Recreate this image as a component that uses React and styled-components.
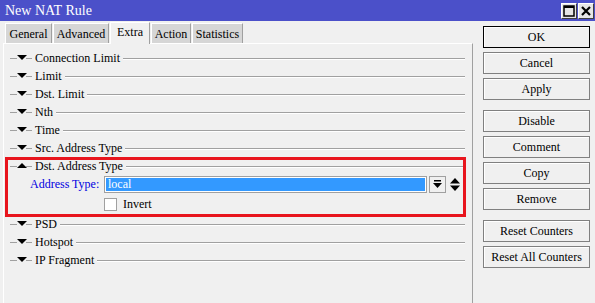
import styled, { createGlobalStyle } from 'styled-components'

const GlobalStyle = createGlobalStyle`
    html, body {
        margin: 0;
        padding: 0;
        background: #f0f0f0;
    }
    body {
        font-family: "Liberation Serif", "DejaVu Serif", "Times New Roman", serif;
        font-size: 12px;
        color: #000;
    }
`

const filters = [
    'Connection Limit',
    'Limit',
    'Dst. Limit',
    'Nth',
    'Time',
    'Src. Address Type',
]

const after = ['PSD', 'Hotspot', 'IP Fragment']

const tabs = [
    {name: 'General', w: 47},
    {name: 'Advanced', w: 56},
    {name: 'Extra', w: 40},
    {name: 'Action', w: 40},
    {name: 'Statistics', w: 51},
]

const buttonGroups = [
    ['OK', 'Cancel', 'Apply'],
    ['Disable', 'Comment', 'Copy', 'Remove'],
    ['Reset Counters', 'Reset All Counters'],
]

const Arrow = ({up}) => (
    <ArrowSvg width="10" height="6" viewBox="0 0 10 6">
        {up
            ? <polygon points="5,0 10,5 0,5" fill="#000" />
            : <polygon points="0,0 10,0 5,5" fill="#000" />}
    </ArrowSvg>
)

const Section = ({title, up}) => (
    <Row>
        <Dash $w={7} />
        <Arrow up={up} />
        <Dash $w={6} />
        <RowLabel>{title}</RowLabel>
        <Line />
    </Row>
)

const App = () => {
    return (
        <Window>
            <GlobalStyle />
            <TitleBar>
                <Title>New NAT Rule</Title>
                <Controls>
                    <CtrlButton>
                        <svg width="12" height="12" viewBox="0 0 12 12">
                            <rect x="1" y="1" width="10" height="10" fill="none" stroke="#000" strokeWidth="1.5" />
                            <rect x="1" y="1" width="10" height="2" fill="#000" />
                        </svg>
                    </CtrlButton>
                    <CtrlButton>
                        <svg width="12" height="12" viewBox="0 0 12 12">
                            <path d="M2 2 L10 10 M10 2 L2 10" stroke="#000" strokeWidth="2.2" />
                        </svg>
                    </CtrlButton>
                </Controls>
            </TitleBar>
            <Body>
                <Main>
                    <Tabs>
                        {tabs.map((t) => (
                            <Tab key={t.name} $w={t.w} $active={t.name === 'Extra'}>{t.name}</Tab>
                        ))}
                    </Tabs>
                    <Panel>
                        <Rows>
                            {filters.map((f) => <Section key={f} title={f} />)}
                            <Highlight>
                                <Section title="Dst. Address Type" up />
                                <FieldRow>
                                    <FieldLabel>Address Type:</FieldLabel>
                                    <Select>local</Select>
                                    <DropButton>
                                        <svg width="9" height="9" viewBox="0 0 9 9">
                                            <rect x="1" y="0" width="7" height="1.5" fill="#000" />
                                            <polygon points="0,3 9,3 4.5,8" fill="#000" />
                                        </svg>
                                    </DropButton>
                                    <Spinner>
                                        <svg width="10" height="13" viewBox="0 0 10 13">
                                            <polygon points="5,0 10,5.5 0,5.5" fill="#000" />
                                            <polygon points="0,7.5 10,7.5 5,13" fill="#000" />
                                        </svg>
                                    </Spinner>
                                </FieldRow>
                                <CheckRow>
                                    <CheckBox />
                                    <span>Invert</span>
                                </CheckRow>
                            </Highlight>
                            {after.map((f) => <Section key={f} title={f} />)}
                        </Rows>
                    </Panel>
                </Main>
                <Side>
                    {buttonGroups.map((g, i) => (
                        <ButtonGroup key={i}>
                            {g.map((b) => (
                                <SideButton key={b} $default={b === 'OK'}>{b}</SideButton>
                            ))}
                        </ButtonGroup>
                    ))}
                </Side>
            </Body>
        </Window>
    )
}

export default App

const Window = styled.div`
    width: 595px;
    height: 303px;
    display: flex;
    flex-direction: column;
    background: #f0f0f0;
    overflow: hidden;
    font-family: "Liberation Serif", "DejaVu Serif", serif;
`

const TitleBar = styled.div`
    height: 21px;
    background: #4b50c9;
    display: flex;
    align-items: center;
    justify-content: space-between;
    padding: 0 1px 0 5px;
    flex-shrink: 0;
`

const Title = styled.div`
    color: #fff;
    font-size: 14px;
`

const Controls = styled.div`
    display: flex;
    gap: 1px;
`

const CtrlButton = styled.div`
    width: 16px;
    height: 16px;
    box-sizing: border-box;
    background: #e6e6e6;
    border: 1px solid #fff;
    border-right-color: #404040;
    border-bottom-color: #404040;
    display: flex;
    align-items: center;
    justify-content: center;
`

const Body = styled.div`
    flex: 1;
    display: flex;
    min-height: 0;
`

const Main = styled.div`
    width: 470px;
    margin-left: 3px;
    display: flex;
    flex-direction: column;
`

const Tabs = styled.div`
    display: flex;
    align-items: flex-end;
    height: 22px;
    padding-left: 2px;
    gap: 1px;
`

const Tab = styled.div`
    width: ${(p) => p.$w}px;
    height: ${(p) => (p.$active ? '22px' : '20px')};
    margin-bottom: ${(p) => (p.$active ? '-1px' : '0')};
    box-sizing: border-box;
    padding-top: ${(p) => (p.$active ? '1px' : '2px')};
    text-align: center;
    white-space: nowrap;
    background: ${(p) => (p.$active ? '#f0f0f0' : '#d6d6d6')};
    border-top: 1px solid #fff;
    border-left: 1px solid #fff;
    border-right: 1px solid #a0a0a0;
    position: relative;
    z-index: ${(p) => (p.$active ? 1 : 0)};
    line-height: 16px;
`

const Panel = styled.div`
    flex: 1;
    border-top: 1px solid #fff;
    border-left: 1px solid #fff;
    border-right: 1px solid #a0a0a0;
    box-sizing: border-box;
`

const Rows = styled.div`
    padding: 5px 6px 0 1px;
    display: flex;
    flex-direction: column;
`

const Row = styled.div`
    height: 18px;
    display: flex;
    align-items: center;
    padding-left: 5px;
    padding-right: 1px;
`

const Dash = styled.div`
    width: ${(p) => p.$w}px;
    height: 1px;
    background: #a0a0a0;
    flex-shrink: 0;
`

const ArrowSvg = styled.svg`
    flex-shrink: 0;
    margin: 0 -0.5px;
`

const RowLabel = styled.span`
    padding: 0 3px;
    white-space: nowrap;
`

const Line = styled.div`
    flex: 1;
    height: 1px;
    background: #a0a0a0;
    box-shadow: 0 1px 0 #fff;
`

const Highlight = styled.div`
    height: 58px;
    display: flex;
    flex-direction: column;
    position: relative;
    &::after {
        content: '';
        position: absolute;
        inset: 0 0 -2px 0;
        border: 3px solid #e8151d;
        pointer-events: none;
    }
`

const FieldRow = styled.div`
    height: 19px;
    display: flex;
    align-items: center;
    padding-left: 25px;
`

const FieldLabel = styled.span`
    width: 74px;
    color: #0000e0;
    white-space: nowrap;
`

const Select = styled.div`
    width: 323px;
    height: 17px;
    box-sizing: border-box;
    background: #3399ff;
    color: #fff;
    border: 1px solid #a0a0a0;
    box-shadow: inset 0 0 0 1px #fff;
    padding-left: 3px;
    line-height: 14px;
`

const DropButton = styled.div`
    width: 17px;
    height: 17px;
    box-sizing: border-box;
    margin-left: 2px;
    border: 1px solid #a0a0a0;
    background: #f0f0f0;
    display: flex;
    align-items: center;
    justify-content: center;
`

const Spinner = styled.div`
    margin-left: 4px;
    display: flex;
    align-items: center;
`

const CheckRow = styled.div`
    height: 21px;
    display: flex;
    align-items: center;
    padding-left: 99px;
    gap: 6px;
`

const CheckBox = styled.div`
    width: 13px;
    height: 13px;
    box-sizing: border-box;
    border: 1px solid #a0a0a0;
    background: #fff;
`

const Side = styled.div`
    margin-left: 10px;
    padding-top: 5px;
    width: 107px;
    display: flex;
    flex-direction: column;
    gap: 10px;
`

const ButtonGroup = styled.div`
    display: flex;
    flex-direction: column;
    gap: 4px;
`

const SideButton = styled.div`
    height: 22px;
    box-sizing: border-box;
    border: 1px solid ${(p) => (p.$default ? '#000' : '#808080')};
    box-shadow: inset 1px 1px 0 #fff;
    background: #f0f0f0;
    display: flex;
    align-items: center;
    justify-content: center;
    white-space: nowrap;
`
